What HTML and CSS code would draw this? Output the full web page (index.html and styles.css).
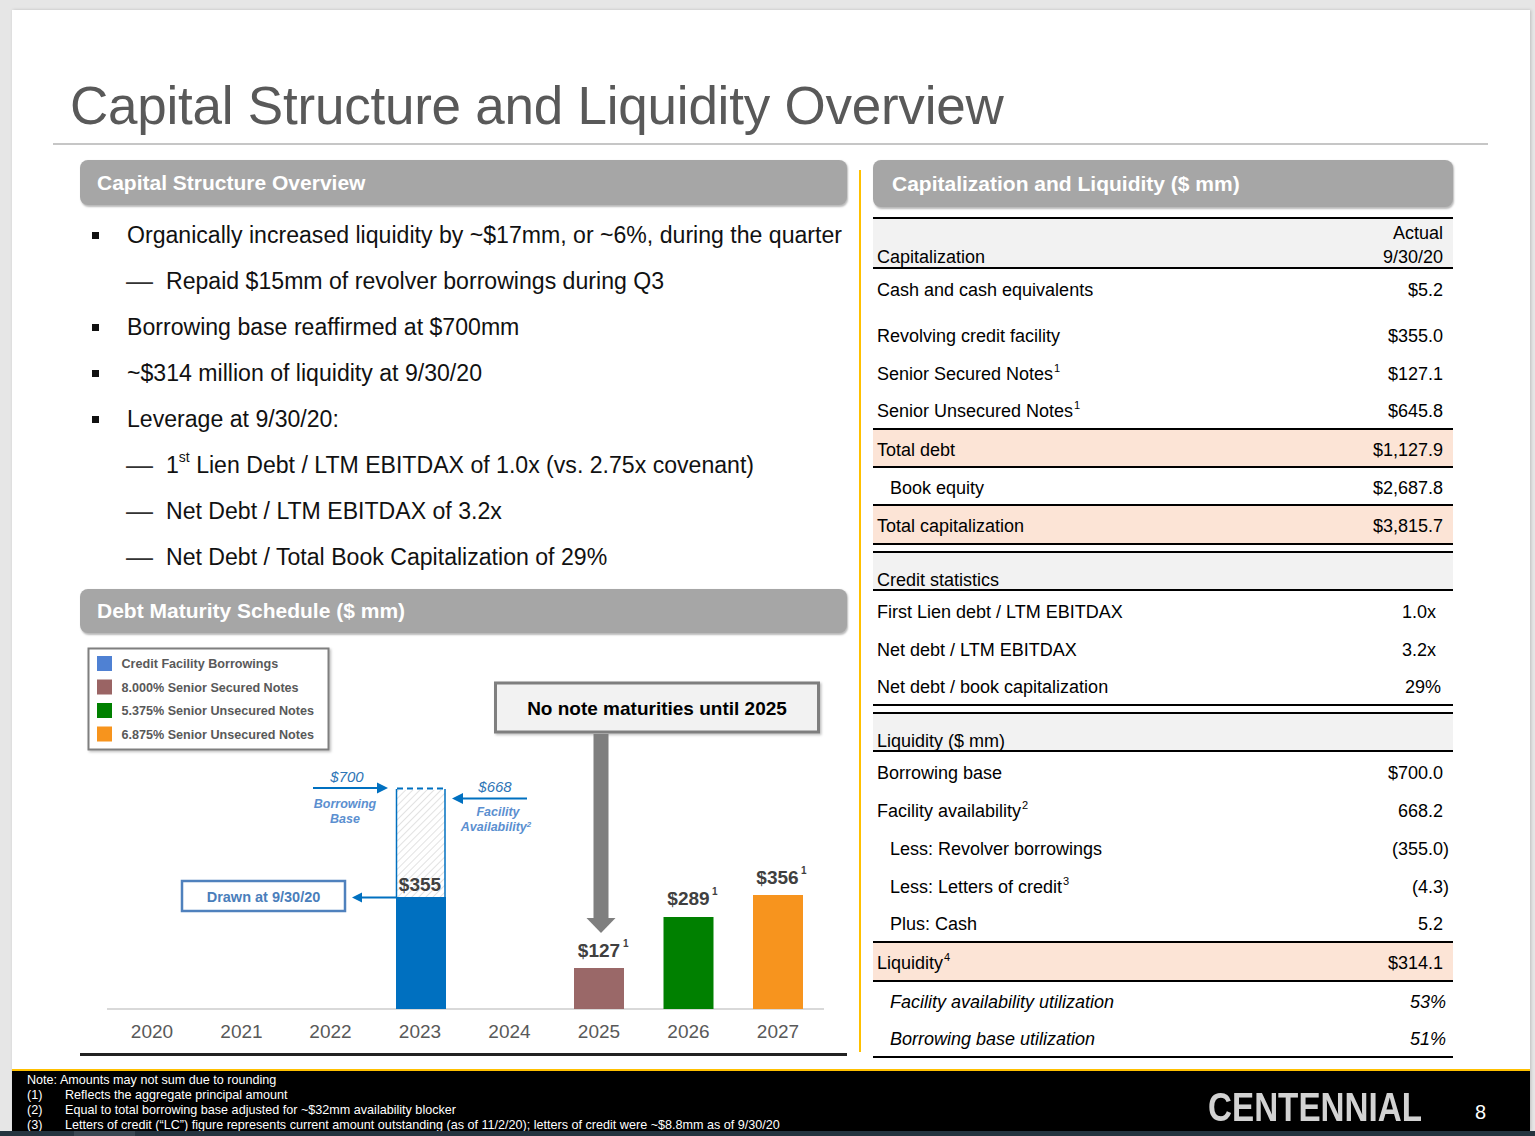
FILE: index.html
```html
<!DOCTYPE html>
<html lang="en">
<head>
<meta charset="utf-8">
<title>Capital Structure and Liquidity Overview</title>
<link rel="stylesheet" href="styles.css">
</head>
<body>
<div class="screen">
  <div class="slide">
    <header class="title-block">
      <h1 class="title">Capital Structure and Liquidity Overview</h1>
      <div class="title-rule"></div>
    </header>

    <div class="content">
      <section class="col-left">
        <div class="bar-head">Capital Structure Overview</div>
        <ul class="points">
          <li class="pt"><span class="sq"></span>Organically increased liquidity by ~$17mm, or ~6%, during the quarter</li>
          <li class="sub"><span class="dash">—</span>Repaid $15mm of revolver borrowings during Q3</li>
          <li class="pt"><span class="sq"></span>Borrowing base reaffirmed at $700mm</li>
          <li class="pt"><span class="sq"></span>~$314 million of liquidity at 9/30/20</li>
          <li class="pt"><span class="sq"></span>Leverage at 9/30/20:</li>
          <li class="sub"><span class="dash">—</span>1<span class="sup-st">st</span>&nbsp;Lien Debt / LTM EBITDAX of 1.0x (vs. 2.75x covenant)</li>
          <li class="sub"><span class="dash">—</span>Net Debt / LTM EBITDAX of 3.2x</li>
          <li class="sub"><span class="dash">—</span>Net Debt / Total Book Capitalization of 29%</li>
        </ul>
        <div class="bar-head short">Debt Maturity Schedule ($ mm)</div>

        <svg class="chart" width="767" height="420" viewBox="80 633 767 420" xmlns="http://www.w3.org/2000/svg">
          <defs>
            <pattern id="hatch" width="5" height="5" patternUnits="userSpaceOnUse" patternTransform="rotate(45)">
              <line x1="0" y1="0" x2="0" y2="5" stroke="#cfcfcf" stroke-width="1.2"/>
            </pattern>
            <filter id="sh" x="-5%" y="-5%" width="115%" height="120%">
              <feDropShadow dx="1.5" dy="1.5" stdDeviation="1" flood-color="#000" flood-opacity="0.25"/>
            </filter>
          </defs>

          <!-- legend -->
          <rect x="88.5" y="648.5" width="240" height="101" fill="#fff" stroke="#7f7f7f" stroke-width="2" filter="url(#sh)"/>
          <rect x="97" y="656" width="15" height="15" fill="#4f81d3"/>
          <rect x="97" y="679.5" width="15" height="15" fill="#9a6464"/>
          <rect x="97" y="703" width="15" height="15" fill="#008000"/>
          <rect x="97" y="726.5" width="15" height="15" fill="#f7941d"/>
          <g class="lg-text">
            <text x="121.5" y="668">Credit Facility Borrowings</text>
            <text x="121.5" y="691.5">8.000% Senior Secured Notes</text>
            <text x="121.5" y="715">5.375% Senior Unsecured Notes</text>
            <text x="121.5" y="738.5">6.875% Senior Unsecured Notes</text>
          </g>

          <!-- callout -->
          <rect x="495.5" y="683" width="323" height="49" fill="#f2f2f2" stroke="#7f7f7f" stroke-width="3" filter="url(#sh)"/>
          <text class="callout" x="657" y="715">No note maturities until 2025</text>
          <rect x="593.5" y="734" width="15" height="185" fill="#7f7f7f"/>
          <polygon points="586.5,918 615.5,918 601,933" fill="#7f7f7f"/>

          <!-- axis -->
          <line x1="107" y1="1009" x2="824" y2="1009" stroke="#d9d9d9" stroke-width="2"/>

          <!-- 2023 revolver -->
          <rect x="396.5" y="790" width="48.5" height="107" fill="url(#hatch)"/>
          <line x1="396.5" y1="789" x2="396.5" y2="897" stroke="#0070c0" stroke-width="1.5"/>
          <line x1="445" y1="789" x2="445" y2="897" stroke="#0070c0" stroke-width="1.5"/>
          <line x1="397" y1="788.5" x2="445" y2="788.5" stroke="#0070c0" stroke-width="2" stroke-dasharray="6 4"/>
          <rect x="396" y="897" width="50" height="112" fill="#0070c0"/>
          <text class="val" x="420" y="891">$355</text>

          <!-- notes -->
          <rect x="574" y="968" width="50" height="41" fill="#9a6868"/>
          <rect x="663.5" y="917" width="50" height="92" fill="#008000"/>
          <rect x="753" y="895" width="50" height="114" fill="#f7941e"/>
          <text class="val" x="599" y="956.5">$127</text><text class="vsup" x="623" y="947">1</text>
          <text class="val" x="688.5" y="904.5">$289</text><text class="vsup" x="712" y="895">1</text>
          <text class="val" x="777.5" y="883.5">$356</text><text class="vsup" x="801" y="874">1</text>

          <!-- years -->
          <g class="yr">
            <text x="152" y="1038">2020</text>
            <text x="241.5" y="1038">2021</text>
            <text x="330.5" y="1038">2022</text>
            <text x="420" y="1038">2023</text>
            <text x="509.5" y="1038">2024</text>
            <text x="599" y="1038">2025</text>
            <text x="688.5" y="1038">2026</text>
            <text x="778" y="1038">2027</text>
          </g>

          <!-- drawn box -->
          <rect x="182" y="881" width="163" height="30" fill="#fff" stroke="#4f81bd" stroke-width="2.5"/>
          <text class="drawn" x="263.5" y="901.5">Drawn at 9/30/20</text>
          <line x1="396" y1="897.5" x2="360" y2="897.5" stroke="#0070c0" stroke-width="2"/>
          <polygon points="352,897.5 362,892.5 362,902.5" fill="#0070c0"/>

          <!-- borrowing base -->
          <text class="amt" x="347" y="782">$700</text>
          <line x1="313" y1="788" x2="379" y2="788" stroke="#0070c0" stroke-width="2"/>
          <polygon points="388,788 377,782.5 377,793.5" fill="#0070c0"/>
          <text class="lbl" x="345" y="807.5">Borrowing</text>
          <text class="lbl" x="345" y="822.5">Base</text>

          <!-- facility availability -->
          <text class="amt" x="495" y="792">$668</text>
          <line x1="527" y1="798.5" x2="461" y2="798.5" stroke="#0070c0" stroke-width="2"/>
          <polygon points="452,798.5 463,793 463,804" fill="#0070c0"/>
          <text class="lbl" x="498" y="816">Facility</text>
          <text class="lbl" x="496" y="830.5">Availability<tspan class="lsup" dy="-4">2</tspan></text>
        </svg>
        <div class="left-rule"></div>
      </section>

      <div class="divider"></div>

      <section class="col-right">
        <div class="bar-head tall">Capitalization and Liquidity ($ mm)</div>
        <div class="fin">
          <div class="rule"></div>
          <div class="row hdr h48"><span>Capitalization</span><span class="two">Actual<br>9/30/20</span></div>
          <div class="rule"></div>
          <div class="row h38"><span>Cash and cash equivalents</span><span class="v">$5.2</span></div>
          <div class="gap8"></div>
          <div class="row h38"><span>Revolving credit facility</span><span class="v">$355.0</span></div>
          <div class="row h38"><span>Senior Secured Notes<span class="sup">1</span></span><span class="v">$127.1</span></div>
          <div class="row h37"><span>Senior Unsecured Notes<span class="sup">1</span></span><span class="v">$645.8</span></div>
          <div class="rule"></div>
          <div class="row peach h36"><span>Total debt</span><span class="v">$1,127.9</span></div>
          <div class="rule"></div>
          <div class="row h36 ind"><span>Book equity</span><span class="v">$2,687.8</span></div>
          <div class="rule"></div>
          <div class="row peach h37"><span>Total capitalization</span><span class="v">$3,815.7</span></div>
          <div class="rule"></div>
          <div class="gap6"></div>
          <div class="rule"></div>
          <div class="row hdr h36"><span>Credit statistics</span></div>
          <div class="rule"></div>
          <div class="row h38"><span>First Lien debt / LTM EBITDAX</span><span class="v x">1.0x</span></div>
          <div class="row h38"><span>Net debt / LTM EBITDAX</span><span class="v x">3.2x</span></div>
          <div class="row h37"><span>Net debt / book capitalization</span><span class="v pct">29%</span></div>
          <div class="rule"></div>
          <div class="gap6"></div>
          <div class="rule"></div>
          <div class="row hdr h36"><span>Liquidity ($ mm)</span></div>
          <div class="rule"></div>
          <div class="row h38"><span>Borrowing base</span><span class="v">$700.0</span></div>
          <div class="row h38"><span>Facility availability<span class="sup">2</span></span><span class="v">668.2</span></div>
          <div class="row h38 ind"><span>Less: Revolver borrowings</span><span class="v paren">(355.0)</span></div>
          <div class="row h38 ind"><span>Less: Letters of credit<span class="sup">3</span></span><span class="v paren">(4.3)</span></div>
          <div class="row h37 ind"><span>Plus: Cash</span><span class="v">5.2</span></div>
          <div class="rule"></div>
          <div class="row peach h37"><span>Liquidity<span class="sup">4</span></span><span class="v">$314.1</span></div>
          <div class="rule"></div>
          <div class="row h37 ind it"><span>Facility availability utilization</span><span class="v ipct">53%</span></div>
          <div class="row h37 ind it"><span>Borrowing base utilization</span><span class="v ipct">51%</span></div>
          <div class="rule"></div>
        </div>
      </section>
    </div>

    <footer class="foot">
      <div class="notes">
        <div class="note">Note: Amounts may not sum due to rounding</div>
        <div class="note"><span class="nn">(1)</span>Reflects the aggregate principal amount</div>
        <div class="note"><span class="nn">(2)</span>Equal to total borrowing base adjusted for ~$32mm availability blocker</div>
        <div class="note"><span class="nn">(3)</span>Letters of credit (“LC”) figure represents current amount outstanding (as of 11/2/20); letters of credit were ~$8.8mm as of 9/30/20</div>
      </div>
      <div class="brand">
        <span class="logo">CENTENNIAL</span>
        <span class="pageno">8</span>
      </div>
    </footer>
  </div>
</div>
<div class="taskbar"><span class="tb-seg"></span></div>
</body>
</html>
```

FILE: styles.css
```css
* { box-sizing: border-box; }

html, body {
  margin: 0;
  padding: 0;
}

body {
  width: 1535px;
  height: 1136px;
  overflow: hidden;
  background: #e6e6e6;
  font-family: "Liberation Sans", Arial, sans-serif;
  color: #000;
}

.screen {
  height: 1131px;
  padding: 10px 5px 0 12px;
}

.slide {
  width: 1518px;
  height: 1121px;
  background: #fff;
  display: flex;
  flex-direction: column;
  overflow: hidden;
  box-shadow: 1px 0 3px rgba(0, 0, 0, 0.18);
}

/* ---------- title ---------- */
.title-block {
  padding: 66px 0 0 41px;
}

.title {
  margin: 0;
  padding-left: 17px;
  font-size: 53px;
  line-height: 60px;
  letter-spacing: -0.23px;
  font-weight: normal;
  color: #595959;
  white-space: nowrap;
}

.title-rule {
  width: 1435px;
  height: 2px;
  margin-top: 7px;
  background: #c6c6c6;
}

/* ---------- columns ---------- */
.content {
  display: flex;
  padding-left: 68px;
  margin-top: 15px;
}

.col-left {
  width: 767px;
  display: flex;
  flex-direction: column;
}

.divider {
  width: 2px;
  height: 882px;
  margin: 10px 12px 0 12px;
  background: #ffc000;
}

.col-right {
  width: 580px;
  display: flex;
  flex-direction: column;
}

.bar-head {
  height: 45px;
  padding-left: 17px;
  display: flex;
  align-items: center;
  background: #a6a6a6;
  border-radius: 8px;
  box-shadow: 1px 1.5px 2px rgba(0, 0, 0, 0.28);
  color: #fff;
  font-weight: bold;
  font-size: 21px;
  white-space: nowrap;
}

.bar-head.short { height: 44px; }
.bar-head.tall { height: 47px; padding-left: 19px; }

/* ---------- bullets ---------- */
.points {
  list-style: none;
  margin: 7px 0 9px 0;
  padding: 0;
}

.points li {
  height: 46px;
  display: flex;
  align-items: center;
  font-size: 23.1px;
  line-height: 46px;
  white-space: nowrap;
  color: #111;
}

.pt { padding-left: 12px; }

.sq {
  width: 7px;
  height: 7px;
  margin-right: 28px;
  background: #111;
  flex: none;
}

.sub { padding-left: 46px; }

.dash {
  width: 40px;
  flex: none;
  font-size: 27px;
  line-height: 46px;
  color: #333;
}

.sup-st {
  font-size: 14px;
  line-height: 0;
  position: relative;
  top: -8px;
}

/* ---------- chart ---------- */
.chart {
  display: block;
  font-family: "Liberation Sans", Arial, sans-serif;
}

.lg-text text {
  font-size: 12.6px;
  font-weight: bold;
  fill: #595959;
}

.callout {
  font-size: 19px;
  font-weight: bold;
  fill: #000;
  text-anchor: middle;
}

.val {
  font-size: 19px;
  font-weight: bold;
  fill: #404040;
  text-anchor: middle;
}

.vsup {
  font-size: 10px;
  font-weight: bold;
  fill: #404040;
}

.yr text {
  font-size: 19px;
  fill: #595959;
  text-anchor: middle;
}

.drawn {
  font-size: 14.5px;
  font-weight: bold;
  fill: #4a7ebb;
  text-anchor: middle;
}

.amt {
  font-size: 15px;
  font-style: italic;
  fill: #2e75b6;
  text-anchor: middle;
}

.lbl {
  font-size: 12.5px;
  font-weight: bold;
  font-style: italic;
  fill: #5b8fd0;
  text-anchor: middle;
}

.lsup { font-size: 8px; }

.left-rule {
  height: 3px;
  background: #222;
}

/* ---------- table ---------- */
.fin {
  margin-top: 10px;
  font-size: 18px;
}

.rule {
  height: 2px;
  background: #000;
}

.row {
  display: flex;
  justify-content: space-between;
  align-items: center;
  padding: 3px 10px 0 4px;
  line-height: 22px;
  white-space: nowrap;
}

.h48 { height: 48px; }
.h38 { height: 38px; }
.h37 { height: 37px; }
.h36 { height: 36px; }
.gap8 { height: 8px; }
.gap6 { height: 6px; }

.hdr {
  background: #f2f2f2;
  align-items: flex-end;
  padding-top: 0;
}

.hdr > span {
  position: relative;
  top: 1.5px;
}

.two {
  text-align: right;
  line-height: 24px;
}

.hdr.h48 span:first-child { line-height: 24px; }

.peach { background: #fce4d6; }

.ind { padding-left: 17px; }
.it { font-style: italic; }

.sup {
  font-size: 11px;
  line-height: 0;
  position: relative;
  top: -8px;
  margin-left: 1px;
}

.v.x { margin-right: 7px; }
.v.pct { margin-right: 2px; }
.v.paren { margin-right: -6px; }
.v.ipct { margin-right: -3px; }

/* ---------- footer ---------- */
.foot {
  margin-top: auto;
  height: 62px;
  flex: none;
  border-top: 2px solid #ffc000;
  background: #000;
  display: flex;
  justify-content: space-between;
  padding-left: 15px;
  color: #fff;
}

.notes {
  padding-top: 1.5px;
  font-size: 12.6px;
  line-height: 15px;
  white-space: nowrap;
}

.note { display: flex; }

.nn {
  width: 38px;
  flex: none;
}

.brand {
  display: flex;
  align-items: flex-start;
  padding-right: 44px;
}

.logo {
  display: inline-block;
  width: 213px;
  margin-top: 16px;
  font-size: 41px;
  line-height: 41px;
  font-weight: bold;
  color: #d2d2d2;
  white-space: nowrap;
  transform: scaleX(0.81);
  transform-origin: left center;
}

.pageno {
  margin-left: 54px;
  margin-top: 31px;
  font-size: 20px;
  line-height: 20px;
  color: #fff;
}

.taskbar {
  height: 5px;
  background: #25343f;
  position: relative;
}

.tb-seg {
  display: block;
  width: 61px;
  height: 5px;
  margin-left: 74px;
  background: #3a4853;
}
```
